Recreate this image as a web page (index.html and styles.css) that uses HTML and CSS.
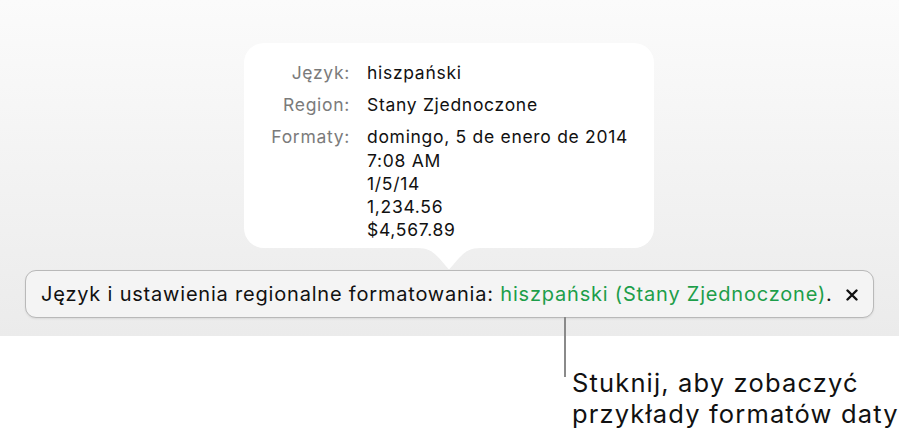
FILE: index.html
```html
<!DOCTYPE html>
<html lang="pl">
<head>
<meta charset="utf-8">
<link rel="stylesheet" href="styles.css">
</head>
<body>
<div class="stage">
  <div class="popover">
    <div class="grid">
      <div class="label">Język:</div>
      <div class="value">hiszpański</div>
      <div class="label">Region:</div>
      <div class="value">Stany Zjednoczone</div>
      <div class="label">Formaty:</div>
      <div class="value">domingo, 5 de enero de 2014<br>7:08 AM<br>1/5/14<br>1,234.56<br>$4,567.89</div>
    </div>
  </div>
  <svg class="arrow" width="64" height="22" viewBox="0 0 64 22">
    <path d="M0 0 H64 C52 0 48 4 42 10 L33 20.5 Q32 21.6 31 20.5 L22 10 C16 4 12 0 0 0 Z" fill="#ffffff"/>
  </svg>
  <div class="bar">
    <span class="msg">Język i ustawienia regionalne formatowania: <span class="green">hiszpański (Stany Zjednoczone)</span>.</span>
    <svg class="close" width="12" height="12" viewBox="0 0 12 12">
      <path d="M1.5 1.5 L10.5 10.5 M10.5 1.5 L1.5 10.5" stroke="#111111" stroke-width="2.4" stroke-linecap="round"/>
    </svg>
  </div>
</div>
<div class="callout">
  <div class="leader"></div>
  <div class="caption">Stuknij, aby zobaczyć<br>przykłady formatów daty</div>
</div>
</body>
</html>
```
FILE: styles.css
```css
html, body {
  margin: 0;
  padding: 0;
  background: #ffffff;
  font-family: Inter, "Liberation Sans", Arial, sans-serif;
}
.stage {
  height: 336px;
  box-sizing: border-box;
  padding-top: 43px;
  background: linear-gradient(to bottom, #fbfbfb 0%, #f3f3f3 50%, #ebebeb 100%);
}
.popover {
  margin-left: 244px;
  width: 410px;
  height: 205px;
  box-sizing: border-box;
  background: #ffffff;
  border-radius: 20px;
  padding-top: 18px;
}
.grid {
  display: grid;
  grid-template-columns: 106px 1fr;
  column-gap: 17px;
  row-gap: 9px;
  font-size: 17.5px;
  letter-spacing: 0.7px;
  line-height: 23.2px;
}
.label {
  text-align: right;
  color: #7b7b7b;
}
.value {
  color: #111111;
}
.arrow {
  display: block;
  margin-left: 417px;
  margin-top: 0;
}
.bar {
  margin-left: 25px;
  width: 849px;
  height: 48px;
  box-sizing: border-box;
  border: 1px solid #b9b9b9;
  border-radius: 11px;
  background: #f4f4f4;
  box-shadow: 0 1px 2px rgba(0,0,0,0.08);
  display: flex;
  align-items: center;
  padding-left: 15px;
  padding-right: 15px;
  font-size: 20px;
  letter-spacing: 0.8px;
  color: #111111;
}
.msg {
  flex: 1;
  white-space: nowrap;
}
.green {
  color: #1d9e4a;
}
.close {
  display: block;
  flex: none;
  margin-top: 1px;
}
.callout {
  position: relative;
  padding-left: 572px;
  padding-top: 31px;
}
.leader {
  position: absolute;
  left: 564px;
  top: -19px;
  width: 2px;
  height: 60px;
  background: #8a8a8a;
}
.caption {
  font-size: 25.5px;
  letter-spacing: 1.15px;
  line-height: 31px;
  color: #111111;
  white-space: nowrap;
}
```
